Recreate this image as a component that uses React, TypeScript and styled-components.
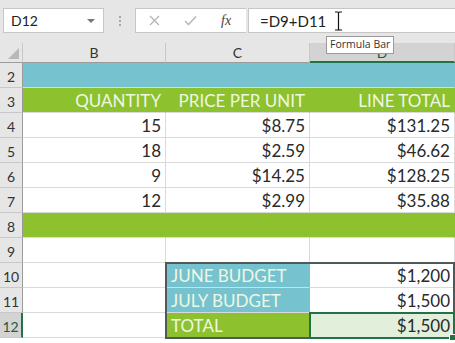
import React from "react";
import styled, { createGlobalStyle } from "styled-components";

const GlobalStyle = createGlobalStyle`
  html, body {
    margin: 0;
    padding: 0;
    background: #ffffff;
    overflow: hidden;
  }
  body {
    font-family: "Lato", "Liberation Sans", sans-serif;
  }
`;

const BLUE = "#76c3cf";
const GREEN = "#8dc12d";
const GRID = "#dadada";
const SEL = "#217346";

const Page = styled.div`
  width: 455px;
  height: 343px;
  position: relative;
  overflow: hidden;
  background: #ffffff;
`;

const Toolbar = styled.div`
  height: 43px;
  background: #e6e6e6;
  display: flex;
  align-items: flex-start;
  padding: 8px 0 0 3px;
  box-sizing: border-box;
`;

const NameBox = styled.div`
  width: 101px;
  height: 25px;
  box-sizing: border-box;
  background: #fff;
  border: 1px solid #c6c6c6;
  display: flex;
  align-items: center;
  justify-content: space-between;
  padding: 0 7px 0 7px;
  font-size: 14px;
  color: #222;
`;

const Caret = styled.span`
  width: 0;
  height: 0;
  border-left: 4px solid transparent;
  border-right: 4px solid transparent;
  border-top: 4px solid #777;
  margin-right: 1px;
`;

const Splitter = styled.div`
  width: 31px;
  height: 25px;
  display: flex;
  flex-direction: column;
  align-items: center;
  justify-content: center;
  gap: 2px;
`;

const Dot = styled.span`
  width: 2px;
  height: 2px;
  background: #a8a8a8;
`;

const FuncBox = styled.div`
  width: 111px;
  height: 25px;
  box-sizing: border-box;
  background: #fff;
  border: 1px solid #c6c6c6;
  border-right: none;
  display: flex;
  align-items: center;
  padding-left: 13px;
  gap: 24px;
`;

const Fx = styled.span`
  font-family: "Liberation Serif", serif;
  font-style: italic;
  font-size: 14px;
  color: #444;
`;

const FormulaField = styled.div`
  flex: 1;
  height: 25px;
  box-sizing: border-box;
  background: #fff;
  border: 1px solid #c6c6c6;
  border-right: none;
  margin-left: 2px;
  display: flex;
  align-items: center;
  padding-left: 11px;
  font-size: 15px;
  color: #222;
  position: relative;
`;

const IBeam = styled.svg`
  position: absolute;
  left: 85px;
  top: 2px;
`;

const Tooltip = styled.div`
  position: absolute;
  left: 326px;
  top: 36px;
  background: #fff;
  border: 1px solid #9a9a9a;
  font-family: "Open Sans", "Liberation Sans", sans-serif;
  font-size: 10.5px;
  color: #333;
  padding: 1px 3px 2px;
  line-height: 13px;
  z-index: 2;
`;

const Sheet = styled.div`
  display: grid;
  position: relative;
  grid-template-columns: 23px 143px 144px 145px;
  grid-template-rows: 20px repeat(11, 25px);
`;

const Corner = styled.div`
  background: #e6e6e6;
  border-right: 1px solid #c8c8c8;
  border-bottom: 1px solid #9b9b9b;
  box-sizing: border-box;
  position: relative;
  &::after {
    content: "";
    position: absolute;
    right: 3px;
    bottom: 3px;
    border-left: 11px solid transparent;
    border-bottom: 11px solid #b8b8b8;
  }
`;

const ColHead = styled.div<{ $active?: boolean }>`
  background: ${(p) => (p.$active ? "#d3d3d3" : "#e6e6e6")};
  border-right: 1px solid #c8c8c8;
  border-bottom: ${(p) => (p.$active ? `2px solid ${SEL}` : "1px solid #9b9b9b")};
  box-sizing: border-box;
  display: flex;
  align-items: center;
  justify-content: center;
  font-size: 14px;
  color: ${(p) => (p.$active ? "#1e5c3a" : "#333")};
`;

const RowHead = styled.div<{ $active?: boolean }>`
  background: ${(p) => (p.$active ? "#d3d3d3" : "#e6e6e6")};
  border-bottom: 1px solid #c8c8c8;
  border-right: ${(p) => (p.$active ? `2px solid ${SEL}` : "1px solid #9b9b9b")};
  box-sizing: border-box;
  display: flex;
  align-items: center;
  justify-content: center;
  font-size: 14px;
  padding-top: 2px;
  color: ${(p) => (p.$active ? "#1e5c3a" : "#333")};
`;

type Fill = "none" | "blue" | "green" | "pale";

const fillColor = (f: Fill) =>
  f === "blue" ? BLUE : f === "green" ? GREEN : f === "pale" ? "#e2efda" : "#fff";

const Cell = styled.div<{ $fill?: Fill; $left?: boolean; $light?: boolean }>`
  background: ${(p) => fillColor(p.$fill ?? "none")};
  border-right: 1px solid
    ${(p) => (p.$fill === "blue" || p.$fill === "green" ? fillColor(p.$fill) : GRID)};
  border-bottom: 1px solid ${GRID};
  box-sizing: border-box;
  display: flex;
  align-items: flex-end;
  justify-content: ${(p) => (p.$left ? "flex-start" : "flex-end")};
  padding: 0 4px 1px 5px;
  font-size: 17px;
  line-height: 20px;
  color: ${(p) => (p.$light ? "#eef7e2" : "#2a2a2a")};
  white-space: nowrap;
  overflow: hidden;
`;

const Span = styled(Cell)<{ $cols: string }>`
  grid-column: ${(p) => p.$cols};
`;

/* range outline and active cell sit over their grid area without taking part in auto-placement */
const RangeBox = styled.div`
  position: absolute;
  grid-column: 3 / 5;
  grid-row: 10 / 13;
  top: -1px;
  left: -1px;
  right: 0;
  bottom: -1px;
  border: 2px solid #4f5a58;
  pointer-events: none;
`;

const Active = styled.div`
  position: absolute;
  grid-column: 4 / 5;
  grid-row: 12 / 13;
  top: -1px;
  left: -1px;
  right: 0;
  bottom: -1px;
  border: 2px solid ${SEL};
  pointer-events: none;
  &::after {
    content: "";
    position: absolute;
    right: -3px;
    bottom: -4px;
    width: 5px;
    height: 5px;
    background: ${SEL};
    border: 1px solid #fff;
  }
`;

const rows = [
  ["15", "$8.75", "$131.25"],
  ["18", "$2.59", "$46.62"],
  ["9", "$14.25", "$128.25"],
  ["12", "$2.99", "$35.88"],
];

export default function App() {
  return (
    <Page>
      <GlobalStyle />
      <Toolbar>
        <NameBox>
          D12
          <Caret />
        </NameBox>
        <Splitter>
          <Dot />
          <Dot />
          <Dot />
        </Splitter>
        <FuncBox>
          <svg width="11" height="11" viewBox="0 0 11 11">
            <path d="M1 1 L10 10 M10 1 L1 10" stroke="#b5b5b5" strokeWidth="1.3" />
          </svg>
          <svg width="13" height="11" viewBox="0 0 13 11">
            <path d="M1 6 L4.5 9.5 L12 1.5" stroke="#b5b5b5" strokeWidth="1.4" fill="none" />
          </svg>
          <Fx>fx</Fx>
        </FuncBox>
        <FormulaField>
          =D9+D11
          <IBeam width="9" height="20" viewBox="0 0 9 20">
            <path
              d="M1 1 H3.5 Q4.5 1 4.5 2 V18 Q4.5 19 3.5 19 H1 M8 1 H5.5 Q4.5 1 4.5 2 M4.5 18 Q4.5 19 5.5 19 H8"
              stroke="#111"
              strokeWidth="1.2"
              fill="none"
            />
          </IBeam>
        </FormulaField>
      </Toolbar>
      <Tooltip>Formula Bar</Tooltip>
      <Sheet>
        <Corner />
        <ColHead>B</ColHead>
        <ColHead>C</ColHead>
        <ColHead $active>D</ColHead>

        <RowHead>2</RowHead>
        <Span $cols="2 / 5" $fill="blue" />

        <RowHead>3</RowHead>
        <Cell $fill="green" $light>QUANTITY</Cell>
        <Cell $fill="green" $light>PRICE PER UNIT</Cell>
        <Cell $fill="green" $light>LINE TOTAL</Cell>

        {rows.map((r, i) => (
          <React.Fragment key={i}>
            <RowHead>{i + 4}</RowHead>
            {r.map((v) => (
              <Cell key={v}>{v}</Cell>
            ))}
          </React.Fragment>
        ))}

        <RowHead>8</RowHead>
        <Span $cols="2 / 5" $fill="green" />

        <RowHead>9</RowHead>
        <Cell />
        <Cell />
        <Cell />

        <RowHead>10</RowHead>
        <Cell />
        <Cell $fill="blue" $left $light>JUNE BUDGET</Cell>
        <Cell>$1,200</Cell>

        <RowHead>11</RowHead>
        <Cell />
        <Cell $fill="blue" $left $light>JULY BUDGET</Cell>
        <Cell>$1,500</Cell>

        <RowHead $active>12</RowHead>
        <Cell />
        <Cell $fill="green" $left $light>TOTAL</Cell>
        <Cell $fill="pale">$1,500</Cell>

        <RangeBox />
        <Active />
      </Sheet>
    </Page>
  );
}
